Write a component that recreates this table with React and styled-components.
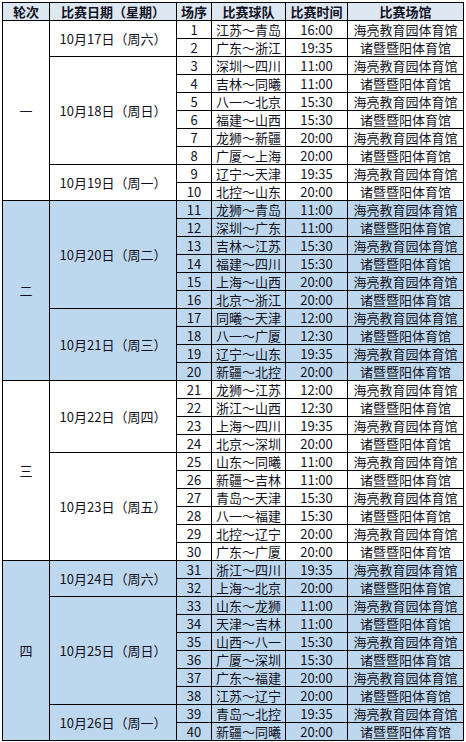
import React from 'react'
import styled, { createGlobalStyle } from 'styled-components'

const GlobalStyle = createGlobalStyle`
    html, body {
        margin: 0;
        padding: 0;
        background: #fff;
    }
    body {
        font-family: "Noto Sans CJK SC", "Noto Sans", sans-serif;
        color: #111122;
    }
`

const Wrapper = styled.div`
    padding: 2px 0 0 2px;
`

const Table = styled.table`
    border-collapse: collapse;
    table-layout: fixed;
    width: 462px;
    font-size: 13px;
    line-height: 17px;
`

const HeadCell = styled.th`
    height: 17px;
    padding: 0;
    border: 1px solid #000;
    background: #dde7f2;
    font-weight: bold;
    text-align: center;
    white-space: nowrap;
    overflow: hidden;
`

const Cell = styled.td`
    height: 17px;
    padding: 0;
    border: 1px solid #000;
    background: ${p => (p.$blue ? '#bdd7ee' : '#fff')};
    text-align: center;
    white-space: nowrap;
    overflow: hidden;
`

const HALL_A = '海亮教育园体育馆'
const HALL_B = '诸暨暨阳体育馆'

const rounds = [
    {
        name: '一',
        days: [
            { date: '10月17日（周六）', games: [['江苏～青岛', '16:00'], ['广东～浙江', '19:35']] },
            {
                date: '10月18日（周日）',
                games: [
                    ['深圳～四川', '11:00'], ['吉林～同曦', '11:00'], ['八一～北京', '15:30'],
                    ['福建～山西', '15:30'], ['龙狮～新疆', '20:00'], ['广厦～上海', '20:00']
                ]
            },
            { date: '10月19日（周一）', games: [['辽宁～天津', '19:35'], ['北控～山东', '20:00']] }
        ]
    },
    {
        name: '二',
        days: [
            {
                date: '10月20日（周二）',
                games: [
                    ['龙狮～青岛', '11:00'], ['深圳～广东', '11:00'], ['吉林～江苏', '15:30'],
                    ['福建～四川', '15:30'], ['上海～山西', '20:00'], ['北京～浙江', '20:00']
                ]
            },
            {
                date: '10月21日（周三）',
                games: [['同曦～天津', '12:00'], ['八一～广厦', '12:30'], ['辽宁～山东', '19:35'], ['新疆～北控', '20:00']]
            }
        ]
    },
    {
        name: '三',
        days: [
            {
                date: '10月22日（周四）',
                games: [['龙狮～江苏', '12:00'], ['浙江～山西', '12:30'], ['上海～四川', '19:35'], ['北京～深圳', '20:00']]
            },
            {
                date: '10月23日（周五）',
                games: [
                    ['山东～同曦', '11:00'], ['新疆～吉林', '11:00'], ['青岛～天津', '15:30'],
                    ['八一～福建', '15:30'], ['北控～辽宁', '20:00'], ['广东～广厦', '20:00']
                ]
            }
        ]
    },
    {
        name: '四',
        days: [
            { date: '10月24日（周六）', games: [['浙江～四川', '19:35'], ['上海～北京', '20:00']] },
            {
                date: '10月25日（周日）',
                games: [
                    ['山东～龙狮', '11:00'], ['天津～吉林', '11:00'], ['山西～八一', '15:30'],
                    ['广厦～深圳', '15:30'], ['广东～福建', '20:00'], ['江苏～辽宁', '20:00']
                ]
            },
            { date: '10月26日（周一）', games: [['青岛～北控', '19:35'], ['新疆～同曦', '20:00']] }
        ]
    }
]

function buildRows() {
    const rows = []
    let no = 1
    rounds.forEach((round, ri) => {
        const blue = ri % 2 === 1
        const total = round.days.reduce((n, d) => n + d.games.length, 0)
        round.days.forEach((day, di) => {
            day.games.forEach((g, gi) => {
                rows.push(
                    <tr key={no}>
                        {di === 0 && gi === 0 && (
                            <Cell $blue={blue} rowSpan={total}>{round.name}</Cell>
                        )}
                        {gi === 0 && (
                            <Cell $blue={blue} rowSpan={day.games.length}>{day.date}</Cell>
                        )}
                        <Cell $blue={blue}>{no}</Cell>
                        <Cell $blue={blue}>{g[0]}</Cell>
                        <Cell $blue={blue}>{g[1]}</Cell>
                        <Cell $blue={blue}>{no % 2 === 1 ? HALL_A : HALL_B}</Cell>
                    </tr>
                )
                no++
            })
        })
    })
    return rows
}

export default function App() {
    return (
        <Wrapper>
            <GlobalStyle />
            <Table>
                <colgroup>
                    <col style={{ width: 47 }} />
                    <col style={{ width: 127 }} />
                    <col style={{ width: 35 }} />
                    <col style={{ width: 74 }} />
                    <col style={{ width: 62 }} />
                    <col style={{ width: 116 }} />
                </colgroup>
                <thead>
                    <tr>
                        <HeadCell>轮次</HeadCell>
                        <HeadCell>比赛日期（星期）</HeadCell>
                        <HeadCell>场序</HeadCell>
                        <HeadCell>比赛球队</HeadCell>
                        <HeadCell>比赛时间</HeadCell>
                        <HeadCell>比赛场馆</HeadCell>
                    </tr>
                </thead>
                <tbody>{buildRows()}</tbody>
            </Table>
        </Wrapper>
    )
}
